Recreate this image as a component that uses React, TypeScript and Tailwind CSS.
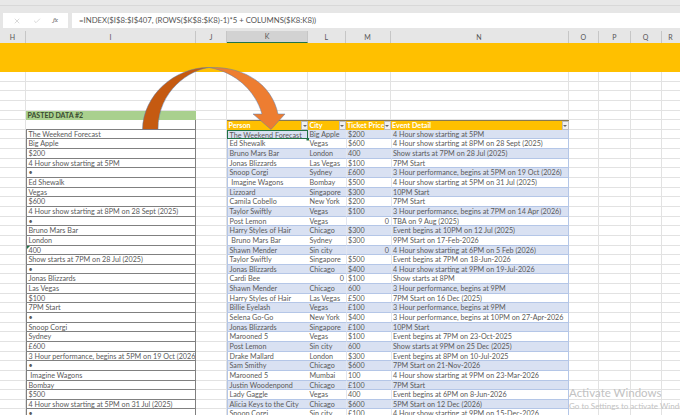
import React from 'react';
import { X, Check } from 'lucide-react';

const font = { fontFamily: 'Lato, "Open Sans", sans-serif' };
const COLS = 'grid grid-cols-[26px_170px_31px_81px_37.5px_45px_178px_30.5px_31.5px_31px_19px]';

type Event = [string, string, string, string];

const events: Event[] = [
  ['The Weekend Forecast', 'Big Apple', '$200', '4 Hour show starting at 5PM'],
  ['Ed Shewalk', 'Vegas', '$600', '4 Hour show starting at 8PM on 28 Sept (2025)'],
  ['Bruno Mars Bar', 'London', '400', 'Show starts at 7PM on 28 Jul (2025)'],
  ['Jonas Blizzards', 'Las Vegas', '$100', '7PM Start'],
  ['Snoop Corgi', 'Sydney', '£600', '3 Hour performance, begins at 5PM on 19 Oct (2026)'],
  ['\u00a0Imagine Wagons', 'Bombay', '$500', '4 Hour show starting at 5PM on 31 Jul (2025)'],
  ['Lizzoard', 'Singapore', '$300', '10PM Start'],
  ['Camila Cobello', 'New York', '$200', '7PM Start'],
  ['Taylor Swiftly', 'Vegas', '$100', '3 Hour performance, begins at 7PM on 14 Apr (2026)'],
  ['Post Lemon', 'Vegas', '0', 'TBA on 9 Aug (2025)'],
  ['Harry Styles of Hair', 'Chicago', '$300', 'Event begins at 10PM on 12 Jul (2025)'],
  ['\u00a0Bruno Mars Bar', 'Sydney', '$300', '9PM Start on 17-Feb-2026'],
  ['Shawn Mender', 'Sin city', '0', '4 Hour show starting at 6PM on 5 Feb (2026)'],
  ['Taylor Swiftly', 'Singapore', '$500', 'Event begins at 7PM on 18-Jun-2026'],
  ['Jonas Blizzards', 'Chicago', '$400', '4 Hour show starting at 9PM on 19-Jul-2026'],
  ['Cardi Bee', '0', '$100', 'Show starts at 8PM'],
  ['Shawn Mender', 'Chicago', '600', '3 Hour performance, begins at 9PM'],
  ['Harry Styles of Hair', 'Las Vegas', '£500', '7PM Start on 16 Dec (2025)'],
  ['Billie Eyelash', 'Vegas', '£100', '3 Hour performance, begins at 9PM'],
  ['Selena Go-Go', 'New York', '$400', '3 Hour performance, begins at 10PM on 27-Apr-2026'],
  ['Jonas Blizzards', 'Singapore', '£100', '10PM Start'],
  ['Marooned 5', 'Vegas', '$100', 'Event begins at 7PM on 23-Oct-2025'],
  ['Post Lemon', 'Sin city', '600', 'Show starts at 9PM on 25 Dec (2025)'],
  ['Drake Mallard', 'London', '$300', 'Event begins at 8PM on 10-Jul-2025'],
  ['Sam Smithy', 'Chicago', '$600', '7PM Start on 21-Nov-2026'],
  ['Marooned 5', 'Mumbai', '100', '4 Hour show starting at 9PM on 23-Mar-2026'],
  ['Justin Woodenpond', 'Chicago', '£100', '7PM Start'],
  ['Lady Gaggle', 'Vegas', '400', 'Event begins at 6PM on 8-Jun-2026'],
  ['Alicia Keys to the City', 'Chicago', '$600', '5PM Start on 12 Dec (2026)'],
  ['Snoop Corgi', 'Sin city', '£100', '4 Hour show starting at 9PM on 15-Dec-2026'],
];

// the pasted column is the first six events, one field per row plus a bullet row
const pasted = events.slice(0, 6).flatMap((e) => [e[0], e[1], e[2], e[3], '•']);

const GRID = 'border-r border-b border-[#e2e2e2]';
const TEXT = 'text-[7.2px] leading-[9px] text-[#5a5a5a] whitespace-nowrap overflow-hidden px-[1.5px]';

const Blank = ({ n = 1 }: { n?: number }) => (
  <>
    {Array.from({ length: n }).map((_, i) => (
      <div key={i} className={GRID} />
    ))}
  </>
);

const HeaderCell = ({ label }: { label: string }) => (
  <div className="flex items-center bg-[#ffc000] border-t border-[#8a7a50] overflow-hidden">
    <span className="flex-1 text-[7.2px] leading-[9px] font-bold text-white whitespace-nowrap overflow-hidden px-[1.5px]">
      {label}
    </span>
    <span className="flex h-full w-[7px] shrink-0 items-center justify-center bg-[#f0f0f0] border border-[#bdbdbd]">
      <span className="border-x-[2px] border-t-[2px] border-x-transparent border-t-[#666]" />
    </span>
  </div>
);

const ColumnHeaders = () => (
  <div className={`${COLS} h-[12px] bg-[#e6e6e6]`}>
    {['H', 'I', 'J', 'K', 'L', 'M', 'N', 'O', 'P', 'Q', 'R'].map((c) => (
      <div
        key={c}
        className={`flex items-center justify-center text-[7px] leading-none text-[#555] border-r border-[#c6c6c6] ${
          c === 'K' ? 'bg-[#d2d2d2] text-[#1f6b43] border-b border-b-[#217346]' : ''
        }`}
      >
        {c}
      </div>
    ))}
  </div>
);

const App = () => {
  return (
    <div className="relative w-[680px] h-[415px] overflow-hidden bg-white" style={font}>
      {/* ribbon edge */}
      <div className="h-[6px] bg-[#e8e8e8] border-b border-[#d8d8d8]" />
      {/* formula bar */}
      <div className="flex h-[25px] gap-1 bg-[#e6e6e6] pt-[7px] pb-[3px] pl-[3px] text-[#b5b5b5]">
        <div className="flex w-[65px] items-center justify-around bg-white px-1">
          <X size={8} strokeWidth={1.5} />
          <Check size={8} strokeWidth={1.5} />
          <span className="font-serif text-[7px] italic text-[#666]">fx</span>
        </div>
        <div className="flex flex-1 items-center bg-white pl-[7px] text-[7.8px] text-[#555] whitespace-nowrap">
          =INDEX($I$8:$I$407, (ROWS($K$8:$K8)-1)*5 + COLUMNS($K8:K8))
        </div>
      </div>
      <ColumnHeaders />
      {/* title band */}
      <div className="h-[29px] bg-[#ffc000]" />

      {[0, 1, 2, 3].map((r) => (
        <div key={r} className={`${COLS} h-[9.65px]`}>
          <Blank n={11} />
        </div>
      ))}

      <div className={`${COLS} h-[9.65px]`}>
        <Blank />
        <div className="flex items-center bg-[#a9d08e] text-[7px] leading-[9px] font-bold text-[#3a4a30] px-[1.5px]">
          PASTED DATA #2
        </div>
        <Blank n={9} />
      </div>

      <div className={`${COLS} h-[9.65px]`}>
        <Blank />
        <div className="border-r border-b border-[#808080]" />
        <Blank />
        <HeaderCell label="Person" />
        <HeaderCell label="City" />
        <HeaderCell label="Ticket Price" />
        <HeaderCell label="Event Detail" />
        <Blank n={4} />
      </div>

      {events.map((e, i) => {
        const fill = i % 2 === 0 ? 'bg-[#d9e1f2]' : 'bg-white';
        const line = 'border-b border-[#b4c6e7]';
        const zero = (v: string) => (v === '0' ? 'text-right' : '');
        const first = i === 0;
        return (
          <div key={i} className={`${COLS} h-[9.65px]`}>
            <Blank />
            <div className={`relative border-x border-b border-[#808080] ${TEXT}`}>
              {pasted[i]}
              {i === 12 && (
                <span className="absolute left-0 top-0 border-r-[3px] border-t-[3px] border-r-transparent border-t-[#217346]" />
              )}
            </div>
            <Blank />
            <div
              className={`relative ${fill} ${TEXT} ${
                first ? 'border border-[#217346]' : `${line} border-l border-l-[#b4c6e7]`
              }`}
            >
              {e[0]}
            </div>
            <div className={`${fill} ${TEXT} ${line} ${zero(e[1])}`}>{e[1]}</div>
            <div className={`${fill} ${TEXT} ${line} border-l border-l-[#e2e6f0] ${zero(e[2])}`}>{e[2]}</div>
            <div className={`${fill} ${TEXT} ${line} border-l border-l-[#e2e6f0] border-r border-r-[#b4c6e7]`}>{e[3]}</div>
            <Blank n={4} />
          </div>
        );
      })}

      {/* curved arrow from the pasted column to the table */}
      <svg className="absolute left-0 top-0 pointer-events-none" width="680" height="415" viewBox="0 0 680 415">
        <path
          d="M142.5 129.5C143 95 175 67 209 67.5C190 70 158 90 158 129.5Z"
          fill="#c55a11"
          stroke="#5b7fb0"
          strokeWidth="0.5"
        />
        <path
          d="M209 67.5C245 66 272 85 278 114L285 114L271 129.5L253 114L262 114C255 90 235 72 209 67.5Z"
          fill="#ed7d31"
          stroke="#5b7fb0"
          strokeWidth="0.5"
        />
        <rect x="306.5" y="138" width="2.5" height="2.5" fill="#217346" />
      </svg>

      {/* windows watermark */}
      <div className="absolute left-[569px] top-[386px] w-[111px] overflow-hidden whitespace-nowrap text-[#c2c2c2]">
        <div className="text-[11.5px] leading-[14px]">Activate Windows</div>
        <div className="text-[8px] leading-[13px]">Go to Settings to activate Windows.</div>
      </div>
    </div>
  );
};

export default App;
